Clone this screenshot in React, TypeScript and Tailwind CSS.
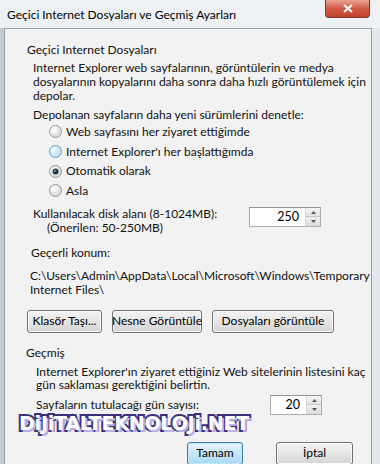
import React from 'react'

const font = { fontFamily: 'Lato, "Noto Sans", sans-serif' }

const Radio = ({ checked, hot }: { checked?: boolean; hot?: boolean }) => (
  <svg width="13" height="13" viewBox="0 0 13 13" className="shrink-0">
    <defs>
      <radialGradient id={hot ? 'rh' : 'rn'} cx="0.35" cy="0.35" r="0.8">
        <stop offset="0" stopColor={hot ? '#f4fbff' : '#ffffff'} />
        <stop offset="1" stopColor={hot ? '#a9d6f2' : '#cfcfcf'} />
      </radialGradient>
    </defs>
    <circle cx="6.5" cy="6.5" r="6" fill={`url(#${hot ? 'rh' : 'rn'})`} stroke={hot ? '#6b9fc5' : '#9a9a9a'} />
    {checked && <circle cx="6.5" cy="6.5" r="3" fill="#1d3a4a" />}
    {checked && <circle cx="5.8" cy="5.8" r="1" fill="#6fa8c9" />}
  </svg>
)

const Spin = ({ value, w }: { value: string; w: string }) => (
  <div className={`flex h-[20px] ${w} border border-[#abadb3] border-t-[#8e9196] bg-white`}>
    <div className="flex-1 text-right pr-[6px] leading-[18px] text-[12.5px] text-black">{value}</div>
    <div className="flex flex-col w-[15px] border-l border-[#d5d5d5]">
      <div className="flex-1 flex items-center justify-center bg-gradient-to-b from-[#f6f6f6] to-[#e3e3e3] border-b border-[#c9c9c9]">
        <svg width="5" height="3" viewBox="0 0 5 3"><path d="M0 3L2.5 0L5 3Z" fill="#555" /></svg>
      </div>
      <div className="flex-1 flex items-center justify-center bg-gradient-to-b from-[#f0f0f0] to-[#dcdcdc]">
        <svg width="5" height="3" viewBox="0 0 5 3"><path d="M0 0L2.5 3L5 0Z" fill="#555" /></svg>
      </div>
    </div>
  </div>
)

const Btn = ({ label, w, def }: { label: string; w: string; def?: boolean }) => (
  <div
    className={`${w} h-[23px] shrink-0 whitespace-nowrap rounded-[3px] border flex items-center justify-center text-[12px] text-black ${
      def
        ? 'border-[#3c7fb1] bg-gradient-to-b from-[#eaf6fd] via-[#c6e6f8] to-[#a7d9f5] shadow-[inset_0_0_0_1px_#c4e5f6]'
        : 'border-[#707070] bg-gradient-to-b from-[#f2f2f2] via-[#e6e6e6] to-[#d3d3d3] shadow-[inset_0_0_0_1px_#fcfcfc]'
    }`}
  >
    {label}
  </div>
)

export default function App() {
  return (
    <div className="w-[380px] h-[464px] overflow-hidden bg-gradient-to-r from-[#c3cad3] via-[#eef1f5] to-[#e3e8ee] flex flex-col text-[#111] whitespace-nowrap" style={font}>
      {/* title bar */}
      <div className="h-[28px] shrink-0 flex items-start justify-between pl-[7px] pr-[10px] bg-[#eef1f4]">
        <div className="mt-[6px] text-[12px] leading-[18px] text-black">Geçici Internet Dosyaları ve Geçmiş Ayarları</div>
        <div className="w-[45px] h-[18px] rounded-b-[4px] border border-t-0 border-[#7c3a33] bg-gradient-to-b from-[#e8a493] via-[#cf5b47] to-[#c5412c] flex items-center justify-center">
          <svg width="10" height="9" viewBox="0 0 10 9">
            <path d="M1 1L9 8M9 1L1 8" stroke="#fff" strokeWidth="2.2" />
          </svg>
        </div>
      </div>

      {/* client area */}
      <div className="relative flex-1 ml-[4px] mr-[8px] border border-[#979ea7] border-b-0 bg-[#f2f2f2] pl-[22px] text-[12px]">
        <div className="mt-[13px] leading-[15px]">Geçici Internet Dosyaları</div>
        <div className="mt-[4px] ml-[6px] leading-[14px]">
          Internet Explorer web sayfalarının, görüntülerin ve medya<br />
          dosyalarının kopyalarını daha sonra daha hızlı görüntülemek için<br />
          depolar.
        </div>
        <div className="mt-[5px] ml-[6px] leading-[14px]">Depolanan sayfaların daha yeni sürümlerini denetle:</div>
        <div className="ml-[22px] flex flex-col">
          {[
            ['Web sayfasını her ziyaret ettiğimde', false, false],
            ["Internet Explorer'ı her başlattığımda", false, true],
            ['Otomatik olarak', true, false],
            ['Asla', false, false],
          ].map(([t, c, h]) => (
            <div key={t as string} className="h-[19.7px] flex items-center gap-[4px]">
              <Radio checked={c as boolean} hot={h as boolean} />
              <span>{t as string}</span>
            </div>
          ))}
        </div>
        <div className="mt-[6px] ml-[6px] flex items-start">
          <div className="w-[216px] leading-[14px]">
            Kullanılacak disk alanı (8-1024MB):
            <div className="pl-[14px]">(Önerilen: 50-250MB)</div>
          </div>
          <Spin value="250" w="w-[72px]" />
        </div>
        <div className="mt-[11px] ml-[4px] leading-[14px]">Geçerli konum:</div>
        <div className="mt-[9px] ml-[3px] leading-[14px]">
          C:\Users\Admin\AppData\Local\Microsoft\Windows\Temporary<br />
          Internet Files\
        </div>
        <div className="mt-[13px] flex">
          <Btn label="Klasör Taşı..." w="w-[75px]" />
          <div className="w-[10px]" />
          <Btn label="Nesne Görüntüle" w="w-[90px]" />
          <div className="w-[10px]" />
          <Btn label="Dosyaları görüntüle" w="w-[122px]" />
        </div>
        <div className="mt-[12px] ml-[-1px] leading-[15px]">Geçmiş</div>
        <div className="mt-[5px] ml-[9px] leading-[13.5px]">
          Internet Explorer'ın ziyaret ettiğiniz Web sitelerinin listesini kaç<br />
          gün saklaması gerektiğini belirtin.
        </div>
        <div className="mt-[3px] ml-[9px] flex items-center">
          <div className="w-[234px] leading-[14px]">Sayfaların tutulacağı gün sayısı:</div>
          <Spin value="20" w="w-[52px]" />
        </div>
        <div className="mt-[27px] ml-[160px] flex">
          <Btn label="Tamam" w="w-[56px]" def />
          <div className="w-[33px]" />
          <Btn label="İptal" w="w-[77px]" />
        </div>

        {/* watermark */}
        <div
          className="absolute left-[14px] top-[383px] text-[19px] leading-[22px] font-black tracking-[-0.2px] text-white [-webkit-text-stroke:4px_#3d2f7a] [paint-order:stroke_fill] [text-shadow:2px_2px_0_#b9b2e6]"
          style={{ fontFamily: '"DejaVu Sans", sans-serif' }}
        >
          DiJiTALTEKNOLOJi.NET
        </div>
      </div>
    </div>
  )
}
